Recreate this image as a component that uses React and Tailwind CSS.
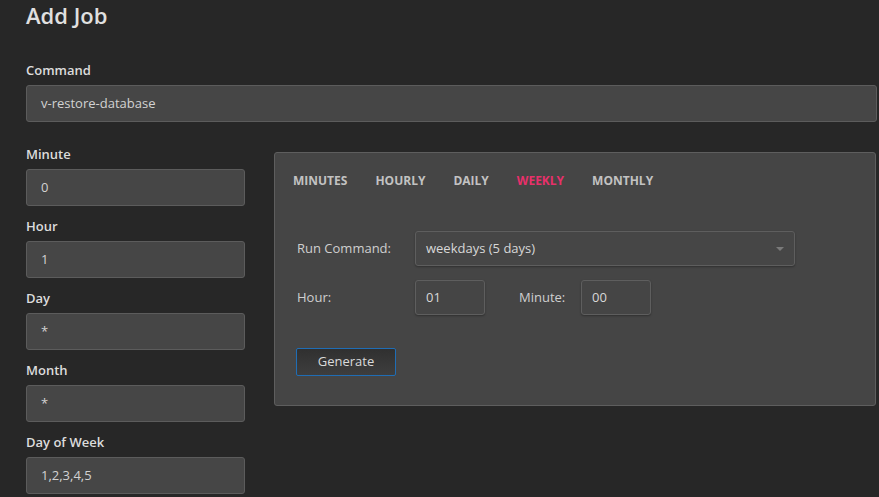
export default function App() {
  const fields = [
    ["Minute", "0"],
    ["Hour", "1"],
    ["Day", "*"],
    ["Month", "*"],
    ["Day of Week", "1,2,3,4,5"],
  ];
  const tabs = ["MINUTES", "HOURLY", "DAILY", "WEEKLY", "MONTHLY"];
  return (
    <div className="min-h-screen w-full bg-[#272727] overflow-hidden" style={{ fontFamily: '"Open Sans", "Noto Sans", sans-serif' }}>
      <div className="pl-[26px] pr-[2px]">
        <h1 className="text-[22px] leading-[30px] text-[#e0e0e0] font-semibold">Add Job</h1>
        <div className="mt-[32px] text-[13px] leading-4 font-semibold text-[#dcdcdc]">Command</div>
        <div className="mt-[7px] h-[37px] rounded-[3px] border border-[#5c5c5c] bg-[#464646] flex items-center px-[14px] text-[13px] text-[#d2d2d2]">
          v-restore-database
        </div>
        <div className="mt-[24px] flex gap-[29px]">
          <div className="w-[219px] shrink-0 flex flex-col">
            {fields.map(([label, value]) => (
              <div key={label} className="flex flex-col mb-[12px]">
                <div className="text-[13px] leading-4 font-semibold text-[#dcdcdc]">{label}</div>
                <div className="mt-[7px] h-[37px] rounded-[3px] border border-[#5c5c5c] bg-[#464646] flex items-center px-[14px] text-[13px] text-[#d2d2d2]">
                  {value}
                </div>
              </div>
            ))}
          </div>
          <div className="mt-[6px] w-[602px] h-[254px] shrink-0 rounded-[3px] border border-[#5e5e5e] bg-[#454545]">
            <div className="flex gap-[28px] pl-[18px] mt-[20px] text-[12px] leading-4 font-bold">
              {tabs.map((t) => (
                <span key={t} className={t === "WEEKLY" ? "text-[#e8306b]" : "text-[#c2c2c2]"}>{t}</span>
              ))}
            </div>
            <div className="pl-[22px] mt-[42px]">
              <div className="flex items-center">
                <span className="w-[118px] text-[13px] text-[#cfcfcf]">Run Command:</span>
                <div className="relative w-[380px] h-[35px] rounded-[3px] border border-[#5e5e5e] bg-[#464646] flex items-center px-[10px] text-[13px] text-[#d8d8d8] shadow-[0_1px_2px_rgba(0,0,0,0.3)]">
                  weekdays (5 days)
                  <span className="absolute right-[10px] top-[15px] w-0 h-0 border-l-[4px] border-r-[4px] border-t-[4px] border-l-transparent border-r-transparent border-t-[#7a7a7a]"></span>
                </div>
              </div>
              <div className="flex items-center mt-[14px]">
                <span className="w-[118px] text-[13px] text-[#cfcfcf]">Hour:</span>
                <div className="w-[70px] h-[35px] rounded-[3px] border border-[#5e5e5e] bg-[#454545] flex items-center px-[10px] text-[13px] text-[#d8d8d8] shadow-[0_1px_2px_rgba(0,0,0,0.3)]">01</div>
                <span className="ml-[34px] w-[62px] text-[13px] text-[#cfcfcf]">Minute:</span>
                <div className="w-[70px] h-[35px] rounded-[3px] border border-[#5e5e5e] bg-[#454545] flex items-center px-[10px] text-[13px] text-[#d8d8d8] shadow-[0_1px_2px_rgba(0,0,0,0.3)]">00</div>
              </div>
              <button className="mt-[33px] -ml-[1px] w-[100px] h-[28px] rounded-[2px] border border-[#1f6db5] bg-gradient-to-b from-[#303030] to-[#3e3e3e] text-[13px] text-[#dadada] flex items-center justify-center">
                Generate
              </button>
            </div>
          </div>
        </div>
      </div>
    </div>
  );
}
